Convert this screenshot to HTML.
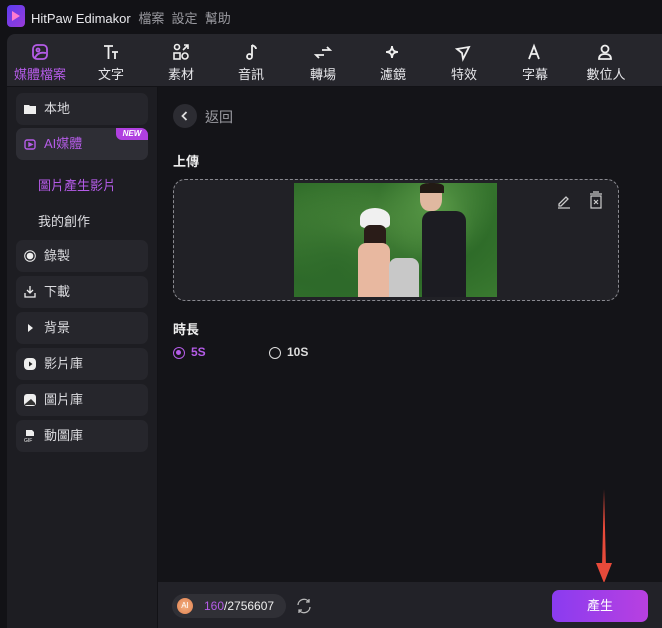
<!DOCTYPE html>
<html><head><meta charset="utf-8"><style>
*{margin:0;padding:0;box-sizing:border-box}
body{width:662px;height:628px;background:#121216;font-family:"Liberation Sans","Noto Sans CJK TC",sans-serif;color:#d8d8dc;position:relative;overflow:hidden}
.abs{position:absolute}
.tb{top:0;left:0;width:662px;height:33px;background:#121216}
.logo{left:7px;top:5px;width:18px;height:22px;border-radius:4px;background:linear-gradient(135deg,#5b3cf0,#9a3bd8)}
.tools{left:7px;top:34px;width:670px;height:52px;background:#26262c;border-radius:8px 8px 0 0}
.tool{position:absolute;top:0;width:70px;text-align:center;font-size:13px;color:#e6e6ea}
.tool svg{display:block;margin:8px auto 2px;width:20px;height:20px}
.side{left:7px;top:87px;width:150px;height:541px;background:#1d1d22}
.item{position:absolute;left:9px;width:132px;height:32px;background:#26262c;border-radius:7px;font-size:13px;line-height:32px;padding-left:28px;color:#dcdce0}
.ic{position:absolute;left:8px;top:10px;width:12px;height:12px}
.main{left:158px;top:87px;width:504px;height:495px;background:#141418}
.bottom{left:158px;top:582px;width:504px;height:46px;background:#222228}
</style></head><body>
<div class="abs tb"></div>
<div class="abs logo"><svg width="18" height="22"><path d="M5 6l8 5-8 5z" fill="#ff7ad0"/></svg></div>
<div class="abs" style="left:31px;top:8px;font-size:13px;color:#e8e8ec">HitPaw Edimakor <span style="color:#9a9aa0;margin-left:4px">檔案&nbsp; 設定&nbsp; 幫助</span></div>
<div class="abs tools">
<div class="tool" style="left:-2px;color:#b55ce8"><svg viewBox="0 0 20 20" fill="none" stroke="#b55ce8" stroke-width="1.8"><rect x="3" y="3" width="14" height="14" rx="4"/><circle cx="8" cy="8" r="1.5"/><path d="M5 16c2-5 6-6 11-5"/></svg>媒體檔案</div>
<div class="tool" style="left:69px"><svg viewBox="0 0 20 20" fill="none" stroke="#eee" stroke-width="1.8"><path d="M3 4h9M7.5 4v13M11 10h6M14 10v7"/></svg>文字</div>
<div class="tool" style="left:139px"><svg viewBox="0 0 20 20" fill="none" stroke="#eee" stroke-width="1.6"><circle cx="6" cy="5" r="2.5"/><path d="M12 8l5-5M13 3h4v4"/><rect x="3" y="11" width="6" height="6"/><circle cx="14" cy="14" r="3"/></svg>素材</div>
<div class="tool" style="left:209px"><svg viewBox="0 0 20 20" fill="none" stroke="#eee" stroke-width="1.8"><path d="M11 3v11"/><circle cx="8.5" cy="14.5" r="2.5"/><path d="M11 3c2 1 4 2 4 4"/></svg>音訊</div>
<div class="tool" style="left:281px"><svg viewBox="0 0 20 20" fill="none" stroke="#eee" stroke-width="1.8"><path d="M9 8h8l-3-3M11 13H3l3 3"/></svg>轉場</div>
<div class="tool" style="left:351px"><svg viewBox="0 0 20 20" fill="none" stroke="#eee" stroke-width="1.8"><path d="M9 4c0 4 2 6 6 6-4 0-6 2-6 6 0-4-2-6-6-6 4 0 6-2 6-6z"/></svg>濾鏡</div>
<div class="tool" style="left:422px"><svg viewBox="0 0 20 20" fill="none" stroke="#eee" stroke-width="1.8"><path d="M3 7l12-2-6 12-1-6z"/></svg>特效</div>
<div class="tool" style="left:493px"><svg viewBox="0 0 20 20" fill="none" stroke="#eee" stroke-width="1.8"><path d="M4 17l5-13 5 13M6 12h6"/></svg>字幕</div>
<div class="tool" style="left:564px"><svg viewBox="0 0 20 20" fill="none" stroke="#eee" stroke-width="1.8"><circle cx="9" cy="7" r="3.5"/><path d="M3 17c0-4 3-5 6-5s6 1 6 5z"/></svg>數位人</div>
</div>
<div class="abs side">
<div class="item" style="top:6px"><svg class="ic" viewBox="0 0 12 12"><path d="M0 2h5l1 1h6v8H0z" fill="#eee"/></svg>本地</div>
<div class="item" style="top:41px;height:32px;background:#2e2e35;color:#b55ce8"><svg class="ic" viewBox="0 0 12 12" fill="none" stroke="#b55ce8" stroke-width="1.4"><rect x="1" y="2" width="10" height="9" rx="2"/><path d="M5 5l3 1.5-3 1.5z" fill="#b55ce8"/></svg>AI媒體<span style="position:absolute;right:0;top:0;height:12px;line-height:12px;width:32px;background:#b040e0;border-radius:0 7px 0 6px;font-size:8px;font-style:italic;font-weight:bold;color:#fff;text-align:center">NEW</span></div>
<div class="abs" style="left:31px;top:88px;font-size:13px;color:#b55ce8">圖片產生影片</div>
<div class="abs" style="left:31px;top:124px;font-size:13px;color:#dcdce0">我的創作</div>
<div class="item" style="top:153px"><svg class="ic" viewBox="0 0 12 12"><circle cx="6" cy="6" r="5.3" fill="none" stroke="#eee"/><circle cx="6" cy="6" r="3.3" fill="#eee"/></svg>錄製</div>
<div class="item" style="top:189px"><svg class="ic" viewBox="0 0 12 12" fill="none" stroke="#eee" stroke-width="1.3"><path d="M6 0v7M3 4l3 3 3-3M1 7v4h10V7"/></svg>下載</div>
<div class="item" style="top:225px"><svg class="ic" viewBox="0 0 12 12"><path d="M4 2l5 4-5 4z" fill="#eee"/></svg>背景</div>
<div class="item" style="top:261px"><svg class="ic" viewBox="0 0 12 12"><rect x="0" y="0" width="12" height="12" rx="4" fill="#eee"/><path d="M5 3.5l3.5 2.5-3.5 2.5z" fill="#222"/></svg>影片庫</div>
<div class="item" style="top:297px"><svg class="ic" viewBox="0 0 12 12"><rect x="0" y="0" width="12" height="12" rx="3" fill="#eee"/><path d="M1 10l6-5 4 4v2H1z" fill="#333"/></svg>圖片庫</div>
<div class="item" style="top:333px"><svg class="ic" viewBox="0 0 12 12"><path d="M2 0h6l2 2v4H2z" fill="#eee"/><text x="0" y="12" font-size="5" fill="#eee" font-family="Liberation Sans">GIF</text></svg>動圖庫</div>
</div>
<div class="abs main">
<div class="abs" style="left:15px;top:17px;width:24px;height:24px;border-radius:50%;background:#2c2c32"><svg width="24" height="24"><path d="M13.5 8l-4 4 4 4" stroke="#ddd" stroke-width="1.8" fill="none"/></svg></div>
<div class="abs" style="left:47px;top:20px;font-size:14px;color:#9c9ca2">返回</div>
<div class="abs" style="left:15px;top:64px;font-size:13px;font-weight:bold;color:#eee">上傳</div>
<div class="abs" style="left:15px;top:92px;width:446px;height:122px;border:1px dashed #8a8a90;border-radius:12px;background:#212126"></div>
<div class="abs" style="left:136px;top:96px;width:203px;height:114px;background:radial-gradient(ellipse at 30% 40%,#4f8c3e,#2d6a28 60%,#3a7a30);overflow:hidden">
 <div class="abs" style="left:0;top:0;width:203px;height:114px;background:radial-gradient(circle at 70% 20%,#5a9a48 0,transparent 35%),radial-gradient(circle at 20% 80%,#2e6a2a,transparent 45%)"></div>
 <div class="abs" style="left:66px;top:25px;width:30px;height:20px;border-radius:50% 50% 20% 20%;background:#f0f0f0"></div>
 <div class="abs" style="left:70px;top:42px;width:22px;height:72px;background:#2a1c18;border-radius:6px"></div>
 <div class="abs" style="left:64px;top:60px;width:32px;height:54px;background:#e8b8a0;border-radius:8px 8px 0 0"></div>
 <div class="abs" style="left:95px;top:75px;width:30px;height:39px;background:#c8c8c8;border-radius:8px 8px 0 0"></div>
 <div class="abs" style="left:126px;top:0;width:22px;height:28px;background:#e0b8a0;border-radius:40%"></div>
 <div class="abs" style="left:126px;top:0;width:24px;height:10px;background:#221a14;border-radius:40% 40% 0 0"></div>
 <div class="abs" style="left:128px;top:28px;width:44px;height:86px;background:#1c1c22;border-radius:10px 10px 0 0"></div>
</div>
<svg class="abs" style="left:398px;top:106px" width="16" height="16" fill="none" stroke="#ccc" stroke-width="1.3"><path d="M3 11l7-7 2 2-7 7H3zM2 15h12"/></svg>
<svg class="abs" style="left:430px;top:104px" width="16" height="18" fill="none" stroke="#ccc" stroke-width="1.2"><path d="M2 3h12M5 1h6M3 5h10v12H3zM6 9l4 4M10 9l-4 4"/></svg>
<div class="abs" style="left:15px;top:232px;font-size:13px;font-weight:bold;color:#eee">時長</div>
<div class="abs" style="left:15px;top:260px;width:12px;height:12px;border:1.5px solid #b55ce8;border-radius:50%"><div style="margin:2px;width:5px;height:5px;border-radius:50%;background:#b55ce8"></div></div>
<div class="abs" style="left:33px;top:258px;font-size:12px;font-weight:bold;color:#b55ce8">5S</div>
<div class="abs" style="left:111px;top:260px;width:12px;height:12px;border:1.5px solid #ddd;border-radius:50%"></div>
<div class="abs" style="left:129px;top:258px;font-size:12px;font-weight:bold;color:#ddd">10S</div>
<svg class="abs" style="left:436px;top:402px" width="20" height="96"><path d="M10 0L8 78h4z" fill="#e84a3a"/><path d="M2 74l8 20 8-20z" fill="#e84a3a"/></svg>
</div>
<div class="abs bottom">
<div class="abs" style="left:14px;top:12px;width:114px;height:24px;border-radius:12px;background:#303036"></div>
<div class="abs" style="left:19px;top:16px;width:16px;height:16px;border-radius:50%;background:radial-gradient(circle,#f3b080,#e08050);font-size:8px;color:#fff;text-align:center;line-height:16px">AI</div>
<div class="abs" style="left:46px;top:17px;font-size:12px;color:#eee"><span style="color:#b55ce8">160</span>/2756607</div>
<svg class="abs" style="left:137px;top:15px" width="18" height="18" fill="none" stroke="#bbb" stroke-width="1.3"><path d="M3 8a6 6 0 0 1 11-3M15 10a6 6 0 0 1-11 3M14 2v3h-3M4 16v-3h3"/></svg>
<div class="abs" style="left:394px;top:8px;width:96px;height:32px;border-radius:7px;background:linear-gradient(90deg,#8a3cf0,#b840e0);font-size:13px;color:#fff;text-align:center;line-height:32px">產生</div>
</div>
</body></html>
